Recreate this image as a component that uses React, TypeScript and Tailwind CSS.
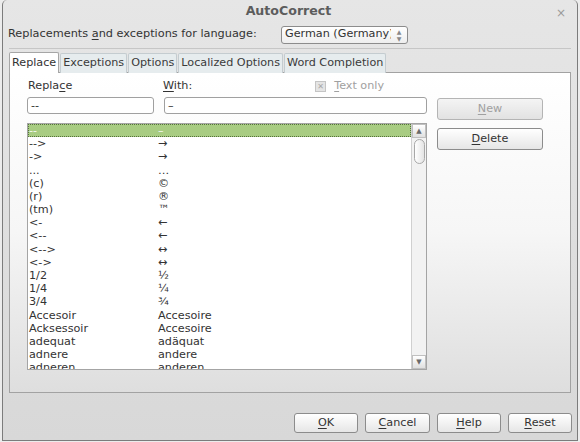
import React from "react";

const rows: [string, string][] = [
  ["--", "–"],
  ["-->", "→"],
  ["->", "→"],
  ["...", "…"],
  ["(c)", "©"],
  ["(r)", "®"],
  ["(tm)", "™"],
  ["<-", "←"],
  ["<--", "←"],
  ["<-->", "↔"],
  ["<->", "↔"],
  ["1/2", "½"],
  ["1/4", "¼"],
  ["3/4", "¾"],
  ["Accesoir", "Accesoire"],
  ["Acksessoir", "Accesoire"],
  ["adequat", "adäquat"],
  ["adnere", "andere"],
  ["adneren", "anderen"],
];

const tabs = ["Replace", "Exceptions", "Options", "Localized Options", "Word Completion"];

function Btn({ u, rest, disabled, className }: { u: string; rest: string; disabled?: boolean; className: string }) {
  return (
    <button
      className={
        "flex items-center justify-center rounded-[3px] border bg-gradient-to-b " +
        (disabled
          ? "border-[#b4b4b4] from-[#f4f4f4] to-[#e2e2e2] text-[#a0a0a0] "
          : "border-[#8c8c8c] from-white to-[#e6e6e6] text-[#333] ") +
        className
      }
    >
      <span>
        <span className="underline underline-offset-2">{u}</span>
        {rest}
      </span>
    </button>
  );
}

export default function App() {
  return (
    <div className="w-[580px] h-[442px] bg-[#ececec] px-[2px] pb-[1px] font-['DejaVu_Sans',sans-serif] text-[11.2px] text-[#333]">
      <div className="h-full flex flex-col rounded-t-[5px] border-x border-b border-[#7c7c7c] bg-gradient-to-b from-[#e6e6e6] to-[#d8d8d8]">
        {/* title bar */}
        <div className="relative h-[22px] flex items-center justify-center">
          <span className="text-[12.6px] font-bold text-[#5c5c5c] ml-[-3px]">AutoCorrect</span>
          <span className="absolute right-[11px] top-[4px] text-[12px] text-[#9a9a9a]">×</span>
        </div>

        {/* language row */}
        <div className="h-[25px] flex items-center pl-[5px]">
          <span className="w-[273px] text-[11.3px]">
            Replacements <span className="underline underline-offset-2">a</span>nd exceptions for language:
          </span>
          <div className="w-[127px] h-[18px] flex items-center rounded-[3px] border border-[#8c8c8c] bg-gradient-to-b from-white to-[#eeeeee]">
            <span className="flex-1 pl-[3px] overflow-hidden whitespace-nowrap text-[#333]">German (Germany)</span>
            <span className="w-[16px] h-full flex flex-col items-center justify-center text-[6px] leading-[7px] text-[#888]">
              <span>▲</span>
              <span>▼</span>
            </span>
          </div>
        </div>

        <div className="mx-[6px] mt-[1px] h-px bg-[#c6c6c6]" />

        {/* tabs */}
        <div className="mt-[3px] flex items-end pl-[6px] h-[21px] relative z-10">
          {tabs.map((t, i) => (
            <div
              key={t}
              className={
                i === 0
                  ? "h-[21px] px-[2px] flex items-center border border-b-0 border-[#a6a6a6] bg-white rounded-t-[2px]"
                  : "h-[20px] ml-[1px] px-[2px] flex items-center border border-b-0 border-[#c4ccd0] bg-[#e6ecee] rounded-t-[2px] text-[#3a3a3a]"
              }
            >
              {t}
            </div>
          ))}
        </div>

        {/* panel */}
        <div className="mx-[6px] mt-[-1px] h-[321px] border border-[#a2a2a2] bg-gradient-to-b from-white via-[#f6f6f6] to-[#dedede] pl-[17px] pt-[4px] flex gap-[10px]">
          <div className="w-[400px] flex flex-col">
            <div className="h-[19px] flex items-center">
              <span className="w-[136px] pl-[1px]">
                Repla<span className="underline underline-offset-2">c</span>e
              </span>
              <span>
                <span className="underline underline-offset-2">W</span>ith:
              </span>
              <span className="ml-[123px] w-[11px] h-[11px] flex items-center justify-center border border-[#c4c4c4] bg-[#e4e4e4] text-[8px] leading-none text-[#a8a8a8]">
                ✕
              </span>
              <span className="ml-[8px] text-[#a0a0a0]">
                <span className="underline underline-offset-2">T</span>ext only
              </span>
            </div>
            <div className="mt-[1px] flex gap-[10px]">
              <div className="w-[127px] h-[17px] rounded-[3px] border border-[#a0a0a0] bg-white pl-[3px] flex items-center leading-none">--</div>
              <div className="w-[263px] h-[17px] rounded-[3px] border border-[#a0a0a0] bg-white pl-[3px] flex items-center leading-none">–</div>
            </div>
            <div className="mt-[9px] h-[247px] border border-[#a4a4a4] bg-white flex overflow-hidden">
              <div className="flex-1 overflow-hidden">
                {rows.map(([a, b], i) => (
                  <div
                    key={i}
                    className={
                      "h-[13.2px] flex items-center leading-none whitespace-nowrap " +
                      (i === 0 ? "bg-[#a8cc82] outline-1 outline-dotted outline-[#55713c] -outline-offset-1 text-[#f4f8f0]" : "")
                    }
                  >
                    <span className="w-[130px] pl-[1px]">{a}</span>
                    <span>{b}</span>
                  </div>
                ))}
              </div>
              <div className="w-[15px] border-l border-[#d0d0d0] bg-[#f2f2f2] flex flex-col items-center">
                <div className="w-[14px] h-[14px] flex items-center justify-center bg-gradient-to-b from-white to-[#e0e0e0] border border-[#c0c0c0] text-[7px] text-[#6a6a6a]">▲</div>
                <div className="mt-[1px] w-[11px] h-[25px] rounded-full border border-[#a8a8a8] bg-gradient-to-r from-white to-[#e4e4e4]" />
                <div className="flex-1" />
                <div className="w-[14px] h-[14px] flex items-center justify-center bg-gradient-to-b from-white to-[#e0e0e0] border border-[#c0c0c0] text-[7px] text-[#6a6a6a]">▼</div>
              </div>
            </div>
          </div>
          <div className="flex flex-col pt-[21px]">
            <Btn u="N" rest="ew" disabled className="w-[106px] h-[22px]" />
            <Btn u="D" rest="elete" className="mt-[8px] w-[106px] h-[22px]" />
          </div>
        </div>

        {/* bottom buttons */}
        <div className="flex-1 flex items-end justify-end pr-[5px] pb-[7px] gap-[7px]">
          <Btn u="O" rest="K" className="w-[64px] h-[20px]" />
          <Btn u="C" rest="ancel" className="w-[65px] h-[20px]" />
          <Btn u="H" rest="elp" className="w-[64px] h-[20px]" />
          <Btn u="R" rest="eset" className="w-[64px] h-[20px]" />
        </div>
      </div>
    </div>
  );
}
